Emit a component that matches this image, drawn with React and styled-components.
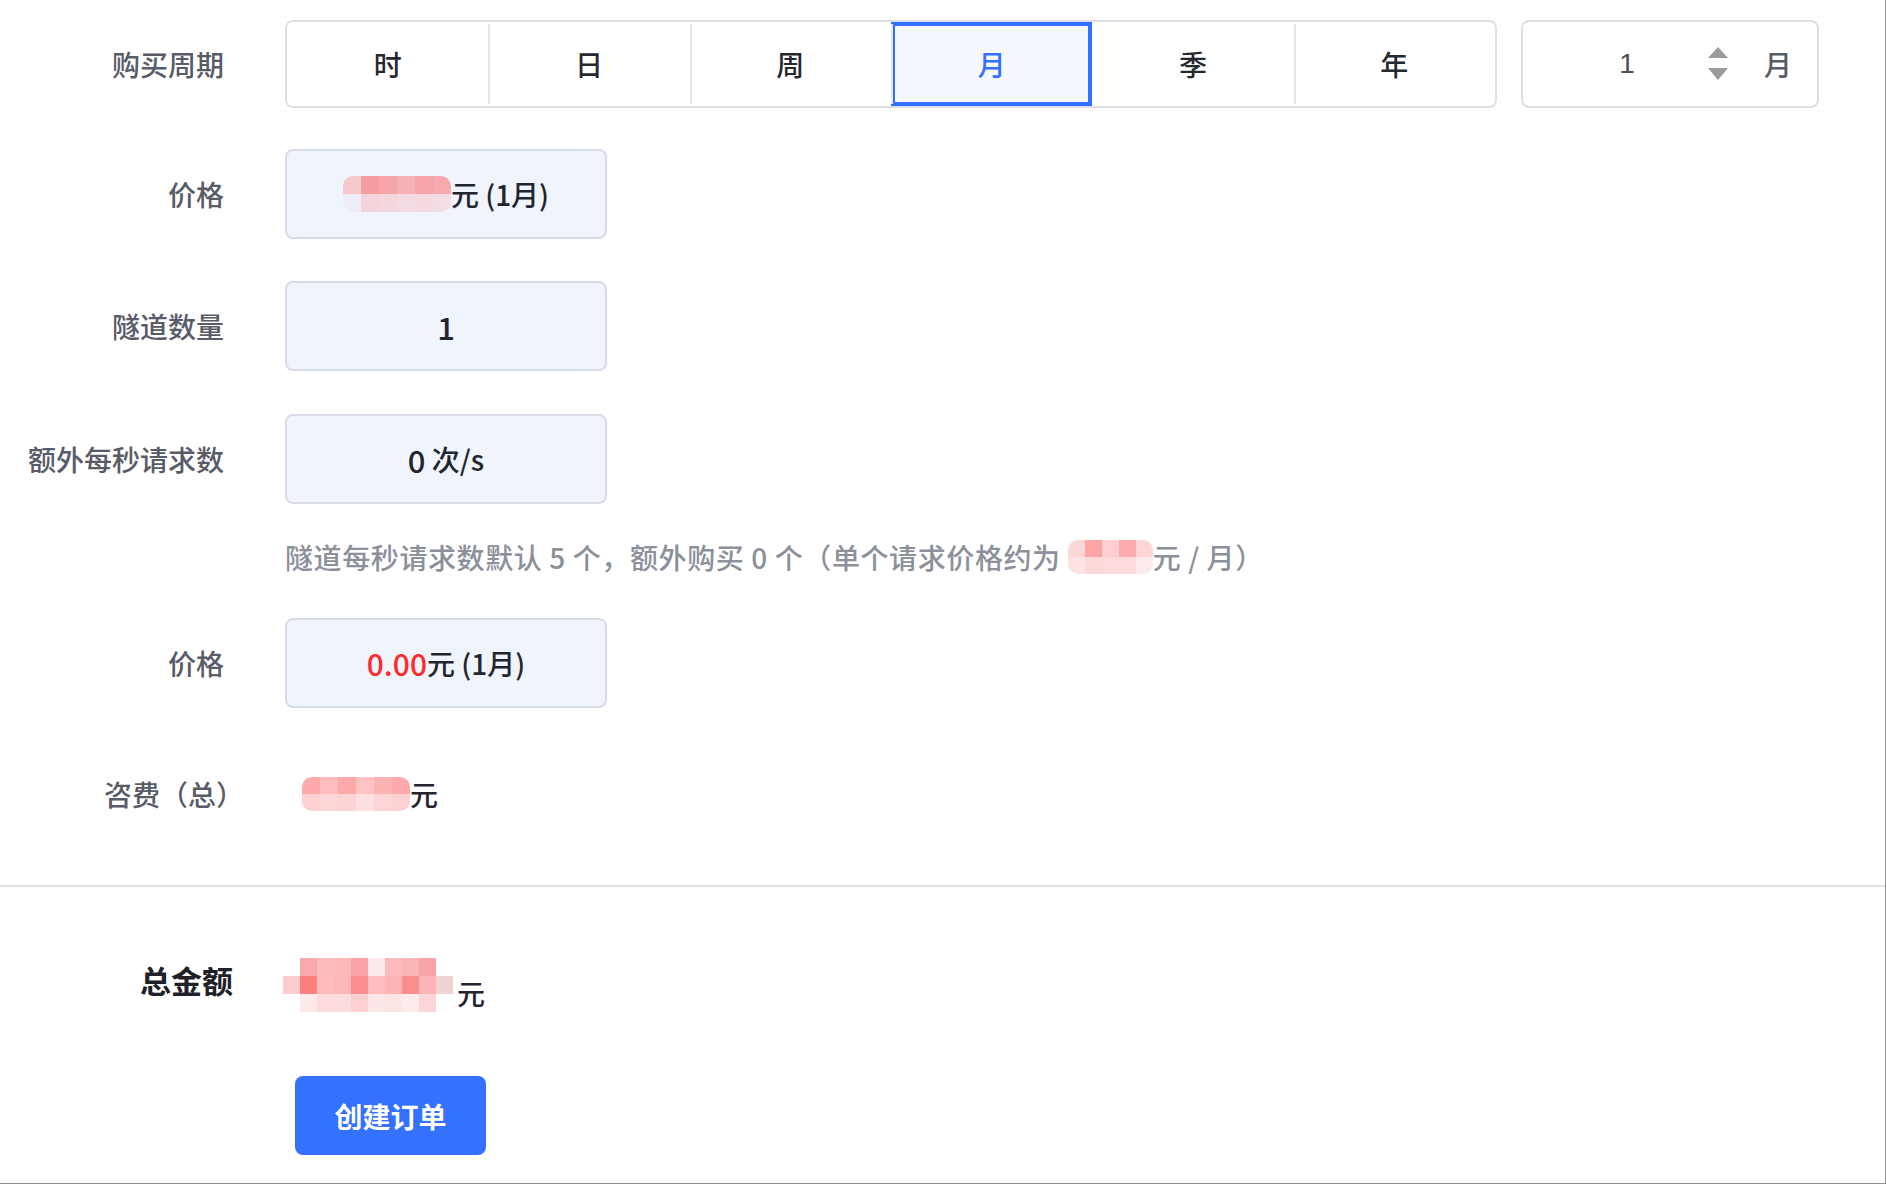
import styled, { createGlobalStyle } from "styled-components";

const GlobalStyle = createGlobalStyle`
  html, body {
    margin: 0;
    padding: 0;
    background: #ffffff;
    overflow: hidden;
  }
  body {
    font-family: "Noto Sans CJK SC", "Noto Sans", sans-serif;
  }
`;

const Frame = styled.div`
  width: 1886px;
  height: 1184px;
  box-sizing: border-box;
  border-right: 1px solid #8f8f8f;
  border-bottom: 1px solid #8f8f8f;
  background: #ffffff;
`;

const Form = styled.div`
  display: flex;
  flex-direction: column;
`;

const Row = styled.div`
  display: grid;
  grid-template-columns: 224px 1fr;
  column-gap: 61px;
  align-items: center;
  margin-top: ${(p) => p.$mt || 0}px;
  min-height: ${(p) => p.$h || 40}px;
`;

const Label = styled.div`
  text-align: right;
  font-size: 28px;
  font-weight: 500;
  color: #585b68;
  white-space: nowrap;
  margin-right: ${(p) => p.$pull || 0}px;
`;

const Field = styled.div`
  display: flex;
  align-items: center;
  gap: 24px;
`;

const Segmented = styled.div`
  display: flex;
  width: 1212px;
  height: 88px;
  box-sizing: border-box;
  border: 2px solid #dcdfe6;
  border-radius: 8px;
  overflow: hidden;
`;

const SegItem = styled.div`
  flex: 1;
  position: relative;
  display: flex;
  align-items: center;
  justify-content: center;
  font-size: 28px;
  font-weight: 500;
  color: ${(p) => (p.$active ? "#3370ff" : "#26282f")};
  background: ${(p) => (p.$active ? "#f5f9ff" : "#ffffff")};
  box-shadow: ${(p) => (p.$active ? "inset 0 0 0 4px #3370ff" : "none")};

  &::before {
    content: "";
    display: ${(p) => (p.$divider ? "block" : "none")};
    position: absolute;
    left: 0;
    top: 2px;
    bottom: 2px;
    width: 2px;
    background: #e3e5ea;
  }
`;

const Stepper = styled.div`
  display: flex;
  align-items: center;
  width: 298px;
  height: 88px;
  box-sizing: border-box;
  border: 2px solid #dcdfe6;
  border-radius: 8px;
`;

const StepNum = styled.span`
  width: 60px;
  margin-left: 74px;
  text-align: center;
  font-family: "Liberation Sans", Arial, sans-serif;
  font-size: 28px;
  color: #4f4f4f;
`;

const Arrows = styled.svg`
  margin-left: 51px;
  display: block;
`;

const StepUnit = styled.span`
  margin-left: 36px;
  font-size: 28px;
  font-weight: 500;
  color: #585b68;
`;

const ValueBox = styled.div`
  width: 322px;
  height: 90px;
  box-sizing: border-box;
  border: 2px solid #d8dce6;
  border-radius: 8px;
  background: #f0f4fc;
  display: flex;
  align-items: center;
  justify-content: center;
  font-size: ${(p) => p.$size || 28}px;
  font-weight: 500;
  color: #23252e;
  white-space: pre;
`;

const Red = styled.span`
  color: #ff2b2b;
  font-size: 30px;
`;

const Big = styled.span`
  font-size: 31px;
`;

const Hint = styled.div`
  display: flex;
  align-items: center;
  font-size: 28px;
  font-weight: 500;
  letter-spacing: 0.6px;
  color: #8b909b;
  white-space: pre;
`;

const Mosaic = styled.div`
  display: grid;
  grid-template-columns: repeat(${(p) => p.$cols}, ${(p) => p.$cell}px);
  grid-auto-rows: ${(p) => p.$rowH || p.$cell}px;
  border-radius: 10px;
  overflow: hidden;
  flex-shrink: 0;
  margin-right: ${(p) => p.$gap || 0}px;
`;

const Cell = styled.div`
  background: ${(p) => p.$c || "transparent"};
`;

const Plain = styled.div`
  display: flex;
  align-items: center;
  padding-left: ${(p) => p.$pad || 0}px;
  padding-top: ${(p) => p.$top || 0}px;
  font-size: 28px;
  font-weight: 500;
  color: #23252e;
`;

const Yuan = styled.span`
  margin-top: ${(p) => p.$drop || 0}px;
`;

const Divider = styled.div`
  height: 2px;
  background: #dfe2e7;
  margin-top: 71px;
`;

const Summary = styled.div`
  display: grid;
  grid-template-columns: 233px 1fr;
  column-gap: 50px;
  align-items: center;
  margin-top: 58px;
  min-height: 60px;
`;

const TotalLabel = styled.div`
  text-align: right;
  font-size: 31px;
  font-weight: 700;
  color: #1f2129;
`;

const CreateButton = styled.button`
  margin: 63px 0 0 295px;
  width: 191px;
  height: 79px;
  border: none;
  border-radius: 8px;
  background: #3471ff;
  color: #ffffff;
  font-family: "Noto Sans CJK SC", "Noto Sans", sans-serif;
  font-size: 28px;
  font-weight: 700;
  display: block;
  cursor: pointer;
`;

const periods = ["时", "日", "周", "月", "季", "年"];
const activePeriod = "月";

const priceBlur = [
  ["#f7c8cc", "#f59ea2", "#f5a4a8", "#f5b3b8", "#f5a5a9", "#f5aaae"],
  ["#eeecf6", "#f3d4dc", "#f4d6dd", "#f4dbe1", "#f4d9df", "#f3dee5"],
];

const hintBlur = [
  ["#fdd6d7", "#fca5a7", "#fdcfd0", "#fcaaac", "#fdd5d6"],
  ["#fde3e4", "#fdd9da", "#fddbdc", "#fddadb", "#fdeaea"],
];

const feeBlur = [
  ["#fda9aa", "#fdbcbd", "#fca9aa", "#fdc3c4", "#fdb3b4", "#fda9aa"],
  ["#fdd1d2", "#fdd6d7", "#fdd4d5", "#fde1e2", "#fdd5d6", "#fdd0d1"],
];

const totalBlur = [
  [null, "#f9a9ab", "#fdbcbc", "#fbb9b9", "#f9a5a7", "#fde9ea", "#fbbabc", "#fbb5b6", "#f9a5a7", null],
  ["#fdcdcf", "#fb8181", "#fdbbbb", "#fcb7b8", "#f98e90", "#fdbdbe", "#fcb4b6", "#fa8e8f", "#fcb5b6", "#f0d4d4"],
  [null, "#fde9ea", "#fddadb", "#fddcdd", "#fcd0d1", "#fde6e7", "#fde5e6", "#fdecec", "#fdd5d6", null],
];

const Blur = ({ rows, cell, rowH, gap }) => (
  <Mosaic $cols={rows[0].length} $cell={cell} $rowH={rowH} $gap={gap}>
    {rows.flat().map((c, i) => (
      <Cell key={i} $c={c} />
    ))}
  </Mosaic>
);

const App = () => {
  const activeIndex = periods.indexOf(activePeriod);
  return (
    <Frame>
      <GlobalStyle />
      <Form>
        <Row $mt={20} $h={88}>
          <Label>购买周期</Label>
          <Field>
            <Segmented>
              {periods.map((p, i) => (
                <SegItem
                  key={p}
                  $active={p === activePeriod}
                  $divider={i > 0 && i !== activeIndex + 1}
                >
                  {p}
                </SegItem>
              ))}
            </Segmented>
            <Stepper>
              <StepNum>1</StepNum>
              <Arrows width="20" height="34" viewBox="0 0 20 34">
                <polygon points="10,0 20,11 0,11" fill="#9b9b9b" />
                <polygon points="0,21 20,21 10,33" fill="#9b9b9b" />
              </Arrows>
              <StepUnit>月</StepUnit>
            </Stepper>
          </Field>
        </Row>

        <Row $mt={41} $h={90}>
          <Label>价格</Label>
          <ValueBox>
            <Blur rows={priceBlur} cell={18} />
            {"元 (1月)"}
          </ValueBox>
        </Row>

        <Row $mt={42} $h={90}>
          <Label>隧道数量</Label>
          <ValueBox $size={31}>1</ValueBox>
        </Row>

        <Row $mt={43} $h={90}>
          <Label>额外每秒请求数</Label>
          <ValueBox>
            <Big>0</Big>
            {" 次/s"}
          </ValueBox>
        </Row>

        <Row $mt={33} $h={40}>
          <div />
          <Hint>
            {"隧道每秒请求数默认 5 个，额外购买 0 个（单个请求价格约为 "}
            <Blur rows={hintBlur} cell={17} rowH={17} />
            {"元 / 月）"}
          </Hint>
        </Row>

        <Row $mt={41} $h={90}>
          <Label>价格</Label>
          <ValueBox>
            <Red>0.00</Red>
            {"元 (1月)"}
          </ValueBox>
        </Row>

        <Row $mt={66} $h={40}>
          <Label $pull={-20}>咨费（总）</Label>
          <Plain $pad={17}>
            <Blur rows={feeBlur} cell={18} rowH={17} />
            <Yuan>元</Yuan>
          </Plain>
        </Row>
      </Form>

      <Divider />

      <Summary>
        <TotalLabel>总金额</TotalLabel>
        <Plain $top={12}>
          <Blur rows={totalBlur} cell={17} rowH={18} gap={4} />
          <Yuan $drop={16}>元</Yuan>
        </Plain>
      </Summary>

      <CreateButton>创建订单</CreateButton>
    </Frame>
  );
};

export default App;
